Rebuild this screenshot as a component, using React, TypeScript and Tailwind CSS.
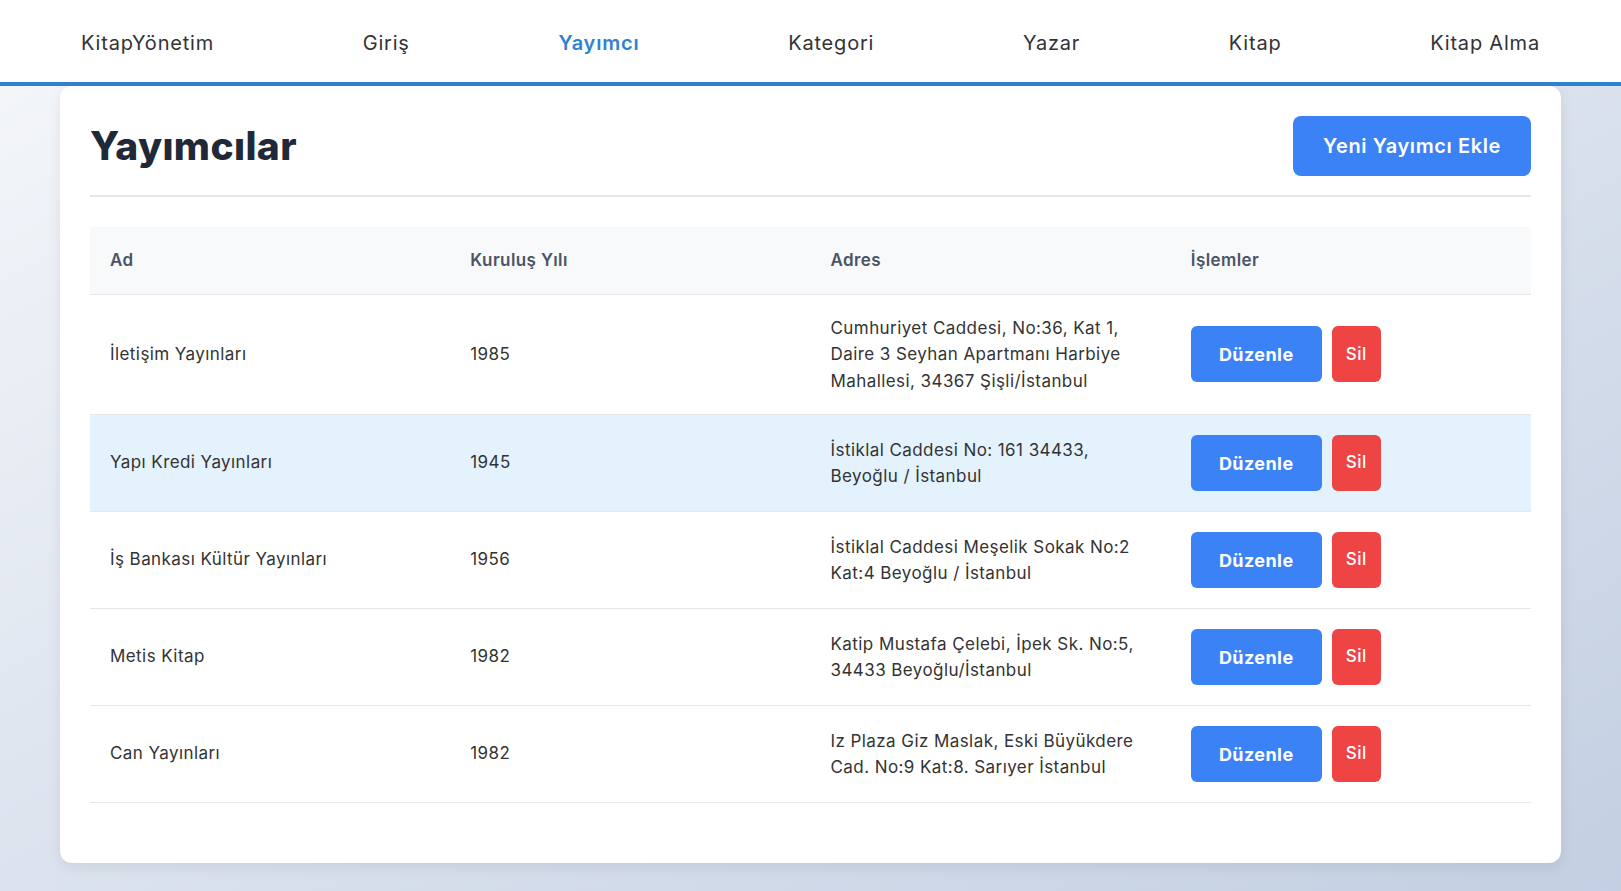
import React from "react";

const navItems = ["Giriş", "Yayımcı", "Kategori", "Yazar", "Kitap", "Kitap Alma"];

const publishers = [
    {
        name: "İletişim Yayınları",
        year: "1985",
        address: ["Cumhuriyet Caddesi, No:36, Kat 1,", "Daire 3 Seyhan Apartmanı Harbiye", "Mahallesi, 34367 Şişli/İstanbul"],
    },
    {
        name: "Yapı Kredi Yayınları",
        year: "1945",
        address: ["İstiklal Caddesi No: 161 34433,", "Beyoğlu / İstanbul"],
        highlight: true,
    },
    {
        name: "İş Bankası Kültür Yayınları",
        year: "1956",
        address: ["İstiklal Caddesi Meşelik Sokak No:2", "Kat:4 Beyoğlu / İstanbul"],
    },
    {
        name: "Metis Kitap",
        year: "1982",
        address: ["Katip Mustafa Çelebi, İpek Sk. No:5,", "34433 Beyoğlu/İstanbul"],
    },
    {
        name: "Can Yayınları",
        year: "1982",
        address: ["Iz Plaza Giz Maslak, Eski Büyükdere", "Cad. No:9 Kat:8. Sarıyer İstanbul"],
    },
];

const App = (): JSX.Element => {
    return (
        <div className="min-h-[891px] bg-gradient-to-br from-[#f5f7fa] to-[#c3cfe2] font-['Inter','Open_Sans',sans-serif] text-[#333]">
            {/* navbar */}
            <nav className="h-[86px] pt-[3px] bg-white border-b-4 border-[#3182ce] flex items-center justify-between px-[81px] text-[20px] tracking-[0.04em]">
                <span className="text-[#333]">KitapYönetim</span>
                {navItems.map((item) => (
                    <span
                        key={item}
                        className={item === "Yayımcı" ? "text-[#3182ce] font-semibold" : "text-[#333]"}
                    >
                        {item}
                    </span>
                ))}
            </nav>

            <div className="px-[60px] pb-[28px]">
                <div className="bg-white rounded-xl shadow-[0_4px_14px_rgba(0,0,0,0.08)] px-[30px] pt-[30px] pb-[60px]">
                    <div className="flex items-center justify-between pb-[19px] border-b-2 border-[#e5e7eb]">
                        <h1 className="text-[39px] font-extrabold text-[#1f2937] tracking-[0.01em]">Yayımcılar</h1>
                        <button className="h-[60px] px-[30px] rounded-lg bg-[#3b82f6] text-white text-[20px] font-semibold tracking-[0.03em]">
                            Yeni Yayımcı Ekle
                        </button>
                    </div>

                    <table className="w-full table-fixed mt-[30px] text-[17px] tracking-[0.025em]">
                        <thead>
                            <tr className="bg-[#f8f9fb] border-b border-[#e5e7eb] text-left text-[#4b5563]">
                                <th className="h-[67px] px-5 font-semibold">Ad</th>
                                <th className="px-5 font-semibold">Kuruluş Yılı</th>
                                <th className="px-5 font-semibold">Adres</th>
                                <th className="px-5 font-semibold">İşlemler</th>
                            </tr>
                        </thead>
                        <tbody>
                            {publishers.map((p) => (
                                <tr
                                    key={p.name}
                                    className={`border-b border-[#e5e7eb] ${p.highlight ? "bg-[#e3f2fd]" : ""}`}
                                >
                                    <td className="px-5 py-5">{p.name}</td>
                                    <td className="px-5 py-5">{p.year}</td>
                                    <td className="px-5 py-5 leading-[26.5px] whitespace-nowrap">
                                        {p.address.map((line, i) => (
                                            <div key={i}>{line}</div>
                                        ))}
                                    </td>
                                    <td className="px-5 py-5">
                                        <div className="flex gap-[10px]">
                                            <button className="h-[56px] w-[131px] rounded-md bg-[#3b82f6] text-white text-[18px] font-bold">
                                                Düzenle
                                            </button>
                                            <button className="h-[56px] w-[49px] rounded-md bg-[#ef4444] text-white text-[17px] font-medium">
                                                Sil
                                            </button>
                                        </div>
                                    </td>
                                </tr>
                            ))}
                        </tbody>
                    </table>
                </div>
            </div>
        </div>
    );
};

export default App;
